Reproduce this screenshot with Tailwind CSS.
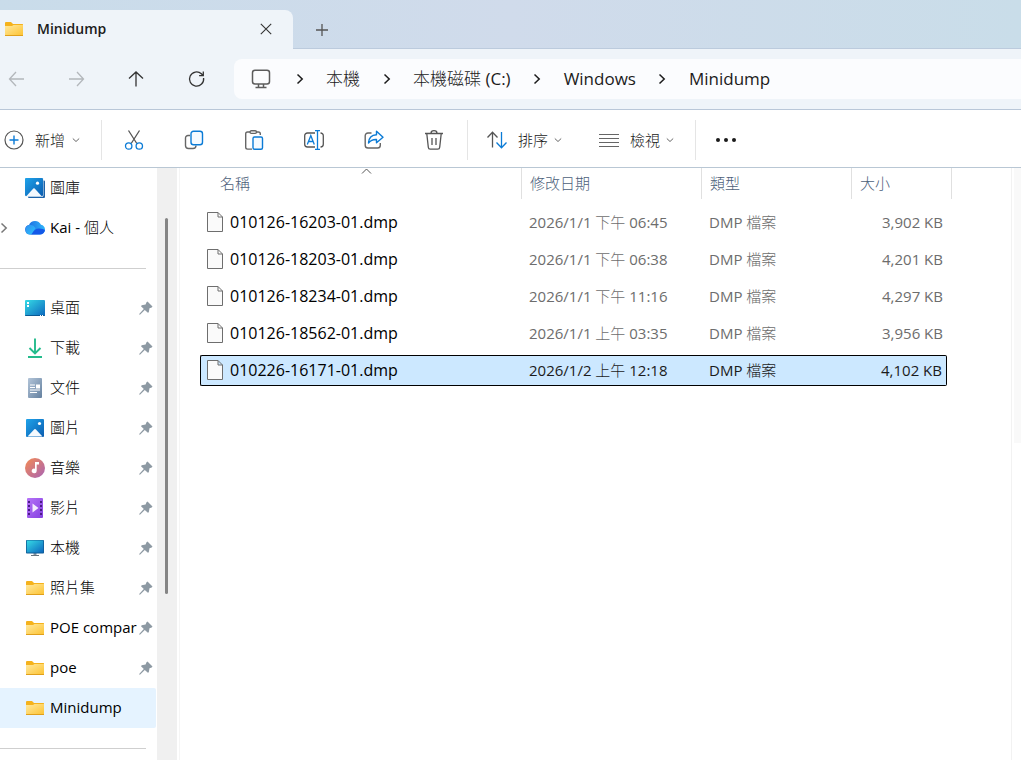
<!DOCTYPE html>
<html lang="zh-Hant">
<head>
  <meta charset="UTF-8" />
  <meta name="viewport" content="width=device-width, initial-scale=1.0" />
  <title>Minidump</title>
  <script src="https://cdn.jsdelivr.net/npm/@tailwindcss/browser@4"></script>
</head>
<body class="h-screen flex flex-col overflow-hidden bg-white text-[15px] leading-5 text-black font-['Open_Sans','Noto_Sans_CJK_TC_Light','Noto_Sans_CJK_TC',sans-serif]">

  <!-- icons shared by several places -->
  <svg class="absolute size-0" aria-hidden="true">
    <linearGradient id="g-folder" x1="0" y1="0" x2="1" y2="1"><stop offset="0" stop-color="#ffe9a0" /><stop offset="1" stop-color="#fdc332" /></linearGradient>
    <linearGradient id="g-blue" x1="0" y1="0" x2="1" y2="1"><stop offset="0" stop-color="#1fa3ea" /><stop offset="1" stop-color="#0a5cb0" /></linearGradient>
    <linearGradient id="g-screen" x1="0" y1="0" x2="1" y2="1"><stop offset="0" stop-color="#36dbe6" /><stop offset="1" stop-color="#0c66bd" /></linearGradient>
    <linearGradient id="g-doc" x1="0" y1="0" x2="1" y2="1"><stop offset="0" stop-color="#b3c5d9" /><stop offset="1" stop-color="#64809f" /></linearGradient>
    <linearGradient id="g-music" x1="0" y1="0" x2="1" y2="1"><stop offset="0" stop-color="#f58b52" /><stop offset="1" stop-color="#a863b5" /></linearGradient>
    <linearGradient id="g-video" x1="0" y1="0" x2="1" y2="1"><stop offset="0" stop-color="#b673f8" /><stop offset="1" stop-color="#8440e0" /></linearGradient>
    <linearGradient id="g-cloud" x1="0" y1="0" x2="1" y2="0"><stop offset="0" stop-color="#1c62dc" /><stop offset="1" stop-color="#2fb6fb" /></linearGradient>
    <linearGradient id="g-cloud-left" x1="0" y1="0" x2="1" y2="1"><stop offset="0" stop-color="#2f8ef0" /><stop offset="1" stop-color="#2cc2fb" /></linearGradient>
    <symbol id="folder" viewBox="0 0 20 20">
      <path d="M1 4a1 1 0 0 1 1-1h5l2 2h9.500a.5.5 0 0 1 .5.5V9H1z" fill="#f5b21c" />
      <path d="M1 7h7l1.500-1H19v10.500H1z" fill="url(#g-folder)" />
      <path d="M1 16.500h18" stroke="#e0a01c" />
    </symbol>
    <symbol id="gallery" viewBox="0 0 20 20">
      <path d="M18 2.500h1a1 1 0 0 1 1 1V19a1 1 0 0 1-1 1H4a1 1 0 0 1-1-1v-.5h15z" fill="#1d62a8" />
      <rect y="0" width="18.500" height="18.500" rx="1" fill="#dcebf8" />
      <rect y="0" width="18" height="18" rx="1" fill="url(#g-blue)" />
      <path d="M1.500 18l6.800-7.500a1 1 0 0 1 1.400 0l6.800 7.500z" fill="#f4f9fe" />
      <circle cx="12.500" cy="5.200" r="1.600" fill="#fff" />
    </symbol>
    <symbol id="cloud" viewBox="0 0 20 20">
      <path d="M4.800 16.500a4.800 4.800 0 0 1-.8-9.500 6.500 6.500 0 0 1 12-.2c2.500.4 4 2.400 4 4.700a5 5 0 0 1-5 5z" fill="url(#g-cloud)" />
      <path d="M4.800 16.500A4.800 4.800 0 0 1 4.500 7c3-.3 4.700 1 6 3.200L7.300 15c-.7 1-1.500 1.500-2.500 1.500z" fill="url(#g-cloud-left)" />
      <path d="M4.800 16.500c1.200 0 2-.6 2.700-1.600 1.600-2.400 3.300-4.400 6.500-4.400 2.800 0 5 1 6 1.500-.3 2.600-2.400 4.500-5 4.500z" fill="#1458e8" />
    </symbol>
    <symbol id="desktop" viewBox="0 0 20 20">
      <rect y="2" width="20" height="16" rx="1" fill="url(#g-screen)" />
      <path d="M2 4h2v2H2zM2 7h2v2H2z" fill="#fff" />
      <path d="M0 17h20v0a1 1 0 0 1-1 1H1a1 1 0 0 1-1-1z" fill="#0a5a94" />
      <path d="M15 17.500h1M17 17.500h1" stroke="#fff" />
    </symbol>
    <symbol id="download" viewBox="0 0 20 20">
      <path d="M10 .5v15M4.500 10l5.500 5.500 5.500-5.500M3 19h14" fill="none" stroke="#24bb8c" stroke-width="1.900" />
    </symbol>
    <symbol id="document" viewBox="0 0 20 20">
      <rect x="3" y="0" width="14" height="20" rx="1" fill="url(#g-doc)" />
      <path d="M5 7h5M5 9.500h5M5 12h10M5 14.500h7" stroke="#fff" stroke-width="1.200" />
      <path d="M11 6.500h4v4h-4z" fill="#fff" />
    </symbol>
    <symbol id="picture" viewBox="0 0 20 20">
      <rect x="1" y="1" width="18" height="18" rx="1" fill="url(#g-blue)" />
      <path d="M2.500 18.500l6.800-7.200a1 1 0 0 1 1.400 0l6.800 7.200z" fill="#f4f9fe" />
      <circle cx="14.500" cy="5.500" r="1.600" fill="#fff" />
    </symbol>
    <symbol id="music" viewBox="0 0 20 20">
      <circle cx="10" cy="10" r="10" fill="url(#g-music)" />
      <path d="M10 4h4v2.600h-2.300V13a2.500 2.300 0 1 1-1.700-2.300z" fill="#fff" />
    </symbol>
    <symbol id="video" viewBox="0 0 20 20">
      <rect x="2" y="0" width="16" height="20" rx="1" fill="url(#g-video)" />
      <path d="M4 3v16M16 3v16" stroke="#4b1b86" stroke-width="2" stroke-dasharray="2 2" />
      <path d="M7.500 5.500v9l6-4.500z" fill="#f5ecff" />
    </symbol>
    <symbol id="monitor" viewBox="0 0 20 20">
      <path d="M8.500 15h3v2.500h-3z" fill="#8795a1" />
      <rect x="1" y="2" width="18" height="13.500" rx=".8" fill="#0f5c96" />
      <rect x="1.800" y="2.500" width="16.400" height="12" fill="url(#g-screen)" />
      <path d="M6 17.500h8" stroke="#66727d" />
    </symbol>
    <symbol id="pin" viewBox="0 0 14 14">
      <path d="M8.500.5 13.500 5.500 12.700 6.500 10.500 7.200 9.800 11.200 8.900 11.800 5.800 8.900 1.200 13.600.3 13.700.4 12.800 4.800 8 2 5.200 2.700 4.300 6.600 3.600 7.500 1.200z" fill="#8d99a3" />
    </symbol>
    <symbol id="chevron" viewBox="0 0 8 12"><path d="M1.500 1.500 6.200 6l-4.700 4.500" fill="none" stroke="currentColor" stroke-width="1.500" /></symbol>
    <symbol id="down" viewBox="0 0 8 6"><path d="M.8 1.500 4 4.500l3.200-3" fill="none" stroke="currentColor" /></symbol>
    <symbol id="file" viewBox="0 0 16 20"><path d="M.5.5h10.500l4.500 4.500v14.500H.5zM11 .5V5h4.500" fill="#fafafa" stroke="#6e6e6e" /></symbol>
  </svg>

  <header class="shrink-0">
    <div class="h-[49px] pt-[10px] flex bg-linear-to-r from-[#c9dcea] via-[#d0dbeb] to-[#c9dde9] border-b border-[#bccbdd]">
      <div class="w-[293px] h-[39px] px-1 pb-[2px] flex items-center rounded-tr-lg bg-[#eff4f9]">
        <svg class="size-5"><use href="#folder" /></svg>
        <span class="ml-[13px] grow text-sm font-semibold text-[#1b1b1b]">Minidump</span>
        <button aria-label="關閉索引標籤" class="mr-[13px] p-1">
          <svg class="size-3" viewBox="0 0 12 12"><path d="M.8.8l10.400 10.400M11.200.8.8 11.200" stroke="#333" stroke-width="1.100" /></svg>
        </button>
      </div>
      <button aria-label="新索引標籤" class="px-[22px] pt-[2px]">
        <svg class="size-[14px]" viewBox="0 0 14 14"><path d="M7 1v12M1 7h12" stroke="#555" stroke-width="1.300" /></svg>
      </button>
    </div>

    <nav class="h-[61px] flex items-center bg-[#eff4f9] border-b border-[#b9c7d8]">
      <div class="w-[234px] pl-[7px] flex gap-10 text-[#333]">
        <button aria-label="上一頁" class="size-5 text-[#b3b7bb]"><svg viewBox="0 0 20 20" fill="none" stroke="currentColor" stroke-width="1.300"><path d="M17 10H2.500M9 3 2.500 10 9 17" /></svg></button>
        <button aria-label="下一頁" class="size-5 text-[#b3b7bb]"><svg viewBox="0 0 20 20" fill="none" stroke="currentColor" stroke-width="1.300"><path d="M2 10h14.500M10 3l6.500 7-6.500 7" /></svg></button>
        <button aria-label="上一層" class="size-5"><svg viewBox="0 0 20 20" fill="none" stroke="currentColor" stroke-width="1.300"><path d="M9 17.500V3M2 9.500 9 3l7 6.500" /></svg></button>
        <button aria-label="重新整理" class="size-5"><svg viewBox="0 0 20 20" fill="none" stroke="currentColor" stroke-width="1.300"><path d="M16.600 9a7.100 7.100 0 1 1-2.200-4.200L16 6.500M16.300 2.500v4.200h-4.200" /></svg></button>
      </div>
      <div class="grow h-10 pl-[17px] flex items-center rounded-l-lg bg-[#fbfcfe] text-[17px] leading-6 text-[#1b1b1b]">
        <svg class="size-5 mr-[2px]" viewBox="0 0 20 20" fill="none" stroke="#5c5c5c" stroke-width="1.500"><rect x="1.500" y="1.200" width="17" height="13.800" rx="2.500" /><path d="M7.500 15v3M12.500 15v3M4.500 18.500h11" /></svg>
        <span class="w-[53px] flex justify-center"><svg class="w-2 h-3"><use href="#chevron" /></svg></span>
        <button>本機</button>
        <span class="w-[53px] flex justify-center"><svg class="w-2 h-3"><use href="#chevron" /></svg></span>
        <button>本機磁碟 (C:)</button>
        <span class="w-[53px] flex justify-center"><svg class="w-2 h-3"><use href="#chevron" /></svg></span>
        <button>Windows</button>
        <span class="w-[53px] flex justify-center"><svg class="w-2 h-3"><use href="#chevron" /></svg></span>
        <button>Minidump</button>
      </div>
    </nav>

    <div class="h-[58px] pl-1 pt-[2px] flex items-center border-b border-[#b9c7d4] text-[#1b1b1b]">
      <button class="w-[98px] h-10 flex items-center border-r border-[#e5e5e5]">
        <svg class="size-5 mr-[11px]" viewBox="0 0 20 20" fill="none"><circle cx="10" cy="10" r="9" stroke="#555" stroke-width="1.200" /><path d="M10 5.500v9M5.500 10h9" stroke="#0b7bd6" stroke-width="1.400" /></svg>
        新增
        <svg class="w-2 h-[6px] ml-[7px] text-[#666]"><use href="#down" /></svg>
      </button>
      <div class="w-[366px] h-10 pl-[22px] flex items-center gap-10 border-r border-[#e5e5e5]">
        <button aria-label="剪下" class="size-5"><svg viewBox="0 0 20 20" fill="none" stroke-width="1.300"><path d="M4.500.5l8.300 13M15.500.5 7.200 13.500" stroke="#555" /><circle cx="4.700" cy="16" r="3.200" stroke="#0b7bd6" /><circle cx="15.300" cy="16" r="3.200" stroke="#0b7bd6" /></svg></button>
        <button aria-label="複製" class="size-5"><svg viewBox="0 0 20 20" fill="none" stroke-width="1.400"><path d="M6 5.500H4A2.500 2.500 0 0 0 1.500 8v7.500A3 3 0 0 0 4.500 18.500H9a3 3 0 0 0 3-3" stroke="#666" /><rect x="7" y="1.200" width="11.500" height="13.500" rx="2.500" fill="#f5faff" stroke="#0b7bd6" /></svg></button>
        <button aria-label="貼上" class="size-5"><svg viewBox="0 0 20 20" fill="none" stroke-width="1.400"><path d="M6 2H3.500A1.800 1.800 0 0 0 1.700 3.800v13.500a1.800 1.800 0 0 0 1.800 1.800H8M12 2h2.500A1.800 1.800 0 0 1 16.300 3.800V5" stroke="#666" /><rect x="6" y=".8" width="6.500" height="2.600" rx="1.300" stroke="#666" /><rect x="9" y="7" width="9.500" height="12.200" rx="1.500" fill="#f5faff" stroke="#0b7bd6" /></svg></button>
        <button aria-label="重新命名" class="size-5"><svg viewBox="0 0 20 20" fill="none" stroke-width="1.300"><path d="M11 3H3.500A2.800 2.800 0 0 0 .7 5.800v8.400A2.800 2.800 0 0 0 3.500 17H11M16.500 3a2.800 2.800 0 0 1 2.800 2.800v8.400a2.800 2.800 0 0 1-2.800 2.800" stroke="#555" /><path d="M11 .7h5M11 19.300h5M13.500.7v18.600M3.300 14.500 6.800 5.500l3.500 9M4.500 11.500h4.600" stroke="#0b7bd6" /></svg></button>
        <button aria-label="共用" class="size-5"><svg viewBox="0 0 20 20" fill="none" stroke-width="1.400"><path d="M7.500 3H4A2.800 2.800 0 0 0 1.200 5.800v9.400A2.800 2.800 0 0 0 4 18h9.500a2.800 2.800 0 0 0 2.800-2.800V13" stroke="#666" /><path d="M12.500 1.300 19 7.300l-6.500 5.500V9.500C8.800 9.300 6.500 10.500 4.500 13c.3-4.800 3.200-8 8-8.200z" stroke="#0b7bd6" stroke-linejoin="round" /></svg></button>
        <button aria-label="刪除" class="size-5"><svg viewBox="0 0 20 20" fill="none" stroke="#555" stroke-width="1.300"><path d="M1 3.500h18M7 3.300a3 2.600 0 0 1 6 0M2.800 3.700l1.500 13.600a2 2 0 0 0 2 1.900h7.400a2 2 0 0 0 2-1.900l1.500-13.600M8 8v7M12 8v7" /></svg></button>
      </div>
      <div class="w-[228px] h-10 pl-[19px] flex items-center border-r border-[#e5e5e5]">
        <button class="w-[112px] flex items-center">
          <svg class="size-5 mr-[11px]" viewBox="0 0 20 20" fill="none" stroke-width="1.300"><path d="M5.500 17.500V2.500M.5 7.500l5-5.300 5 5.300" stroke="#555" /><path d="M14.500 2v15.500M9.500 12.500l5 5.300 5-5.300" stroke="#0b7bd6" /></svg>
          排序
          <svg class="w-2 h-[6px] ml-[6px] text-[#666]"><use href="#down" /></svg>
        </button>
        <button class="flex items-center">
          <svg class="size-5 mr-[11px]" viewBox="0 0 20 20" fill="none" stroke="#666" stroke-width="1.200"><path d="M0 4.500h20M0 8.500h20M0 12.500h20M0 16.500h20" /></svg>
          檢視
          <svg class="w-2 h-[6px] ml-[6px] text-[#666]"><use href="#down" /></svg>
        </button>
      </div>
      <button aria-label="查看更多" class="px-5">
        <svg class="w-5 h-1" viewBox="0 0 20 4" fill="#1b1b1b"><circle cx="2" cy="2" r="2" /><circle cx="10" cy="2" r="2" /><circle cx="18" cy="2" r="2" /></svg>
      </button>
    </div>
  </header>

  <main class="grow min-h-0 flex pb-[6px]">
    <aside class="w-[157px] shrink-0 overflow-hidden">
      <ul id="nav-top"></ul>
      <div class="h-10 flex items-center"><hr class="w-[146px] border-[#cfcfcf]" /></div>
      <ul id="nav-pinned"></ul>
      <div class="h-10 flex items-center"><hr class="w-[146px] border-[#cfcfcf]" /></div>
    </aside>
    <div class="w-5 shrink-0 pt-[50px] pl-2 bg-[#f0f0f0]">
      <div class="w-[3px] h-[376px] rounded-full bg-[#858585]"></div>
    </div>

    <section class="grow pl-5 ml-[2px] border-l border-[#f5f5f5]">
      <table class="w-[752px] table-fixed border-separate border-spacing-0 text-left">
        <thead class="text-[#4c607a]">
          <tr class="h-9 align-top">
            <th class="relative w-[322px] font-normal">
              <svg class="absolute left-[161px] top-0 w-[11px] h-[6px]" viewBox="0 0 11 6"><path d="M1 5.500 5.500 1 10 5.500" fill="none" stroke="#555" /></svg>
              <div class="h-[31px] pl-5 pb-[2px] flex items-center border-r border-[#e0e0e0]">名稱</div>
            </th>
            <th class="w-[180px] font-normal"><div class="h-[31px] pl-2 pb-[2px] flex items-center border-r border-[#e0e0e0]">修改日期</div></th>
            <th class="w-[150px] font-normal"><div class="h-[31px] pl-2 pb-[2px] flex items-center border-r border-[#e0e0e0]">類型</div></th>
            <th class="w-[95px] font-normal"><div class="h-[31px] pl-2 pb-[2px] flex items-center">大小</div></th>
            <td class="w-[5px]"><div class="h-[31px] border-r border-[#e0e0e0]"></div></td>
          </tr>
        </thead>
        <tbody id="files"></tbody>
      </table>
    </section>

    <div class="w-[10px] shrink-0 pl-[2px] border-l border-[#f2f2f2]">
      <div class="h-[275px] bg-[#f9f9f9]"></div>
    </div>
  </main>

  <script>
    const navTop = [
      { name: '圖庫', icon: 'gallery' },
      { name: 'Kai - 個人', icon: 'cloud', expand: true }
    ];

    const navPinned = [
      { name: '桌面', icon: 'desktop', pin: true },
      { name: '下載', icon: 'download', pin: true },
      { name: '文件', icon: 'document', pin: true },
      { name: '圖片', icon: 'picture', pin: true },
      { name: '音樂', icon: 'music', pin: true },
      { name: '影片', icon: 'video', pin: true },
      { name: '本機', icon: 'monitor', pin: true },
      { name: '照片集', icon: 'folder', pin: true },
      { name: 'POE compar', icon: 'folder', pin: true },
      { name: 'poe', icon: 'folder', pin: true },
      { name: 'Minidump', icon: 'folder', active: true }
    ];

    const files = [
      { name: '010126-16203-01.dmp', date: '2026/1/1 下午 06:45', size: '3,902 KB' },
      { name: '010126-18203-01.dmp', date: '2026/1/1 下午 06:38', size: '4,201 KB' },
      { name: '010126-18234-01.dmp', date: '2026/1/1 下午 11:16', size: '4,297 KB' },
      { name: '010126-18562-01.dmp', date: '2026/1/1 上午 03:35', size: '3,956 KB' },
      { name: '010226-16171-01.dmp', date: '2026/1/2 上午 12:18', size: '4,102 KB', selected: true }
    ];

    function navItem(item) {
      return `
        <li>
          <a href="#" class="h-10 pr-[3px] mr-px flex items-center whitespace-nowrap ${item.active ? 'bg-[#e5f3ff] rounded-r-xs' : ''}">
            <span class="w-[25px] shrink-0">${item.expand ? '<svg class="w-2 h-3 text-[#777]"><use href="#chevron" /></svg>' : ''}</span>
            <svg class="size-5 shrink-0"><use href="#${item.icon}" /></svg>
            <span class="grow w-0 ml-[5px] pb-[2px]">${item.name}</span>
            ${item.pin ? '<svg class="size-[14px] shrink-0"><use href="#pin" /></svg>' : ''}
          </a>
        </li>`;
    }

    function fileRow(f) {
      const cell = f.selected ? 'bg-[#cce8ff] border-y border-black text-[#1b1b1b]' : 'text-[#6d6d6d]';
      const first = f.selected ? 'pl-[6px] bg-[#cce8ff] border-y border-l border-black rounded-l-xs' : 'pl-[7px]';
      return `
        <tr class="h-[37px]">
          <td class="p-0"><div class="h-[31px] pb-[2px] flex items-center text-[16px] ${first}">
            <svg class="w-4 h-5 mr-[7px]"><use href="#file" /></svg>${f.name}</div></td>
          <td class="p-0"><div class="h-[31px] pl-[7px] pb-[2px] flex items-center ${cell}">${f.date}</div></td>
          <td class="p-0"><div class="h-[31px] pl-[7px] pb-[2px] flex items-center ${cell}">DMP 檔案</div></td>
          <td class="p-0"><div class="h-[31px] pr-1 pb-[2px] flex items-center justify-end ${cell} ${f.selected ? 'border-r rounded-r-xs' : ''}">${f.size}</div></td>
        </tr>`;
    }

    document.getElementById('nav-top').innerHTML = navTop.map(navItem).join('');
    document.getElementById('nav-pinned').innerHTML = navPinned.map(navItem).join('');
    document.getElementById('files').innerHTML = files.map(fileRow).join('');
  </script>
</body>
</html>
